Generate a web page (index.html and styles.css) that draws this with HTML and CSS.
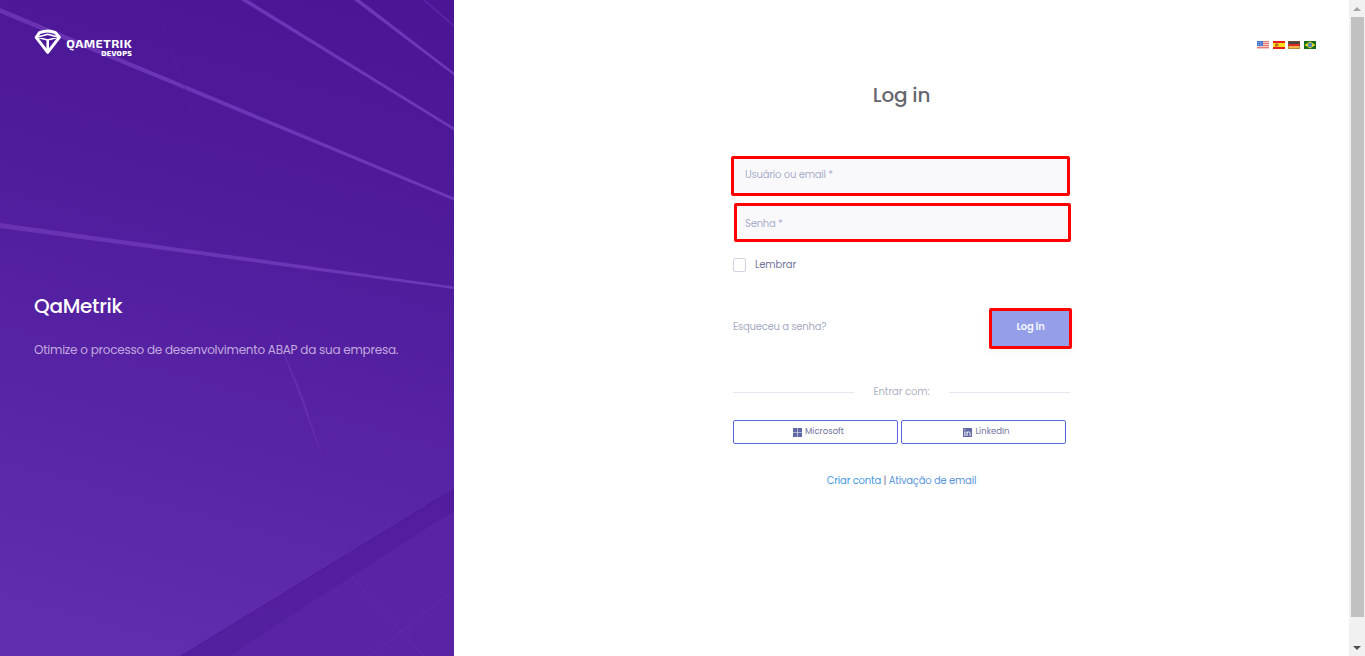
FILE: index.html
```html
<!DOCTYPE html>
<html lang="pt-BR">
<head>
<meta charset="utf-8">
<title>QaMetrik - Log in</title>
<link rel="stylesheet" href="styles.css">
</head>
<body>
<div class="page">
  <aside class="aside">
    <svg class="aside-bg" width="454" height="656" viewBox="0 0 454 656" aria-hidden="true">
      <defs>
        <linearGradient id="sky" x1="330" y1="0" x2="150" y2="656" gradientUnits="userSpaceOnUse">
          <stop offset="0" stop-color="#4a1695"/><stop offset=".35" stop-color="#4f1c9c"/><stop offset="1" stop-color="#612db0"/>
        </linearGradient>
        <linearGradient id="ray" x1="0" x2="454" gradientUnits="userSpaceOnUse" y1="0" y2="0">
          <stop offset="0" stop-color="#6832b2"/><stop offset="1" stop-color="#6c38bb"/>
        </linearGradient>
        <linearGradient id="wall" x1="454" y1="490" x2="230" y2="656" gradientUnits="userSpaceOnUse">
          <stop offset="0" stop-color="#511d9e"/><stop offset="1" stop-color="#5320a0"/>
        </linearGradient>
      </defs>
      <path fill="url(#sky)" d="M0 0h454v656H0z"/>
      <g fill="url(#ray)">
        <path d="M0 8L454 197.500V200.500L0 13z"/>
        <path d="M241 0h7L454 127.500v3z"/>
        <path d="M354 0h6L454 72.500v3z"/>
        <path d="M0 223L454 286.500v2.500L0 228z"/>
      </g>
      <path d="M424 0L454 26" stroke="#5b28a9" stroke-width="1.500"/>
      <path d="M153 0L193 110" stroke="#5520a0" opacity=".7"/>
      <path d="M273 326L303 397L325 465L301 400z" fill="#6632b2" opacity=".7"/>
      <path fill="url(#wall)" d="M454 489V656H181z"/>
      <path fill="#5824a5" d="M454 511V656H230L352 576z"/>
      <path d="M352 577L400 630L424 656M370 656L454 590" fill="none" stroke="#6430ae" stroke-width=".7"/>
      <path d="M454 489L181 656" stroke="#4c1898" stroke-width=".8"/>
    </svg>
    <div class="brand">
      <svg class="gem" width="28" height="27" viewBox="0 0 28 27" fill="none" stroke="#fff" stroke-linejoin="round">
        <path d="M5.500 3.700Q14 .300 21.500 3.700L25.300 8.300L13.700 23.300L2.200 8.300z" stroke-width="3"/>
        <path d="M3 8.200L13.700 5.200L24.500 8.200M3.500 8.200Q9 9.800 13.700 11Q18 9.800 24 8.200" stroke-width="1.600"/>
        <path d="M13.700 10.500V22.500" stroke-width="2.600"/>
      </svg>
      <div class="brand-text"><span class="brand-name">QAMETRIK</span><span class="brand-sub">DEVOPS</span></div>
    </div>
    <div class="intro">
      <h1 class="product">QaMetrik</h1>
      <p class="tagline">Otimize o processo de desenvolvimento ABAP da sua empresa.</p>
    </div>
  </aside>

  <main class="main">
    <nav class="flags">
      <svg width="12" height="8" viewBox="0 0 12 8"><path fill="#f3c9c8" d="M0 0h12v8H0z"/><path d="M0 .500h12M0 2.500h12M0 4.500h12M0 6.500h12" stroke="#e67c76"/><path fill="#4c7bd0" d="M0 0h6v5H0z"/><path d="M1 1.500h4M1 3.500h4" stroke="#b9d0f2" stroke-width=".5" stroke-dasharray="1"/></svg>
      <svg width="12" height="8" viewBox="0 0 12 8"><path fill="#e61d18" d="M0 0h12v8H0z"/><path fill="#ffe01c" d="M0 2h12v4H0z"/><path fill="#c56b24" d="M2 2.500h3.500v3H2z"/></svg>
      <svg width="12" height="8" viewBox="0 0 12 8"><path fill="#4b4440" d="M0 0h12v3H0z"/><path fill="#db2b22" d="M0 3h12v2.500H0z"/><path fill="#f2bd36" d="M0 5.500h12V8H0z"/><path fill="none" stroke="#8a5548" stroke-width=".6" d="M.3.3h11.400v7.400H.3z"/></svg>
      <svg width="12" height="8" viewBox="0 0 12 8"><path fill="#156d19" d="M0 0h12v8H0z"/><path fill="#e5da2d" d="M6 .500L11.500 4L6 7.500L.5 4z"/><circle cx="6" cy="4" r="2.200" fill="#397ab8"/><path d="M4.500 3.500L7.500 4.500" stroke="#a4c6de" stroke-width=".6"/></svg>
    </nav>
    <h2 class="title">Log in</h2>
    <form class="form">
      <input class="field field-user" type="text" placeholder="Usuário ou email *">
      <input class="field field-pass" type="password" placeholder="Senha *">
      <label class="remember"><span class="box"></span><span class="remember-text">Lembrar</span></label>
      <div class="actions">
        <a class="forgot">Esqueceu a senha?</a>
        <button class="login" type="button"><span>Log in</span></button>
      </div>
      <div class="divider"><i></i><span>Entrar com:</span><i></i></div>
      <div class="social">
        <a class="provider"><svg width="9" height="9" viewBox="0 0 9 9" fill="#5f67a4"><path d="M0 0h4.200v4.200H0zM4.700 0H9v4.200H4.700zM0 4.700h4.200V9H0zM4.700 4.700H9V9H4.700z"/></svg><span>Microsoft</span></a>
        <a class="provider"><svg width="9" height="9" viewBox="0 0 9 9"><rect width="9" height="9" rx=".6" fill="#5f67a4"/><path fill="none" stroke="#fff" d="M1.900 3.500V8M1.900 1.300v1M4 8V3.500M4 5Q4.300 3.900 5.700 3.900Q7.100 3.900 7.100 5.400V8"/></svg><span>LinkedIn</span></a>
      </div>
      <p class="links"><a class="create">Criar conta</a><span class="bar">|</span><a class="activate">Ativação de email</a></p>
    </form>
  </main>

  <div class="scrollbar">
    <svg width="16" height="17" viewBox="0 0 16 17"><path fill="#a3a3a3" d="M4 11L8 7l4 4z"/></svg>
    <div class="thumb"></div>
    <svg width="16" height="17" viewBox="0 0 16 17"><path fill="#505050" d="M4 7h8l-4 4z"/></svg>
  </div>
</div>
</body>
</html>
```

FILE: styles.css
```css
* { box-sizing: border-box; }
body { margin: 0; overflow: hidden; font-family: Poppins, Inter, "Open Sans", sans-serif; font-size: 10px; letter-spacing: -.2px; background: #fff; }
h1, h2, p { margin: 0; font-weight: 500; }
span, a, h1, h2, p { white-space: nowrap; }

.page { display: grid; grid-template-columns: 454px 1fr 16px; width: 1365px; height: 656px; }

.aside { position: relative; padding: 29px 34px; color: #fff; }
.aside-bg { position: absolute; inset: 0; }
.brand { position: relative; display: flex; height: 29px; }
.brand-text { display: flex; flex-direction: column; align-items: flex-end; width: 66px; margin-left: 4px; padding-top: 8px; font-family: "Exo 2", Roboto, sans-serif; }
.brand-name { font-size: 12.500px; line-height: 13px; font-weight: 700; letter-spacing: .4px; }
.brand-sub { font-size: 7.500px; line-height: 7px; font-weight: 800; letter-spacing: .3px; }
.intro { position: relative; margin-top: 233px; }
.product { font-size: 20px; line-height: 30px; letter-spacing: -.3px; }
.tagline { margin-top: 19px; font-size: 12px; line-height: 20px; font-weight: 400; letter-spacing: -.24px; color: #c2a8df; }

.main { display: flex; flex-direction: column; align-items: center; }
.flags { display: flex; gap: 3.700px; align-self: flex-end; margin: 41px 33px 0 0; height: 8px; }
.title { margin-top: 31px; font-size: 20px; line-height: 30px; color: #67666e; }

.form { display: flex; flex-direction: column; width: 337px; margin-top: 46px; }
.field { display: block; border: 3px solid #f00; border-radius: 2px; background: #f9f9fc; outline: 0; font: 400 10px/14px Poppins, Inter, sans-serif; letter-spacing: -.2px; }
.field::placeholder { color: #a9afca; opacity: 1; }
.field-user { width: 339px; height: 40px; margin-left: -2px; padding: 0 11px 3px; }
.field-pass { width: 337px; height: 39px; margin: 7px 0 0 1px; padding: 2px 8px 0; }
.remember { display: flex; align-items: center; gap: 9px; height: 14px; margin-top: 16px; letter-spacing: -.1px; color: #74749a; }
.box { width: 13px; height: 14px; border: 1px solid #d1d4e3; border-radius: 2px; }
.actions { display: flex; justify-content: space-between; height: 41px; margin: 36px -2px 0 0; }
.forgot { line-height: 38px; color: #a7abc5; }
.login { width: 83px; height: 41px; padding: 0 0 4px; border: 3px solid #f00; border-radius: 2px; background: #959ee9; box-shadow: 0 3px 10px rgba(80,80,160,.06); color: #f4f4fd; font: 600 10px/14px Poppins, Inter, sans-serif; letter-spacing: -.25px; }
.divider { display: flex; align-items: center; justify-content: space-between; height: 16px; margin-top: 35px; letter-spacing: -.08px; color: #afb0c4; }
.divider i { width: 121px; height: 1px; margin-top: 1px; background: #e6e7f0; }
.social { display: flex; gap: 3px; margin-top: 20px; }
.provider { display: flex; align-items: center; justify-content: center; gap: 3px; width: 165px; height: 24px; padding-left: 6px; border: 1px solid #5867dd; border-radius: 2px; color: #73749d; font-size: 8.500px; letter-spacing: 0; }
.provider span { margin-top: -2px; }
.links { display: flex; justify-content: center; gap: 2.500px; margin-top: 29px; line-height: 16px; color: #7c6f98; font-weight: 400; }
.create { color: #4597df; }
.activate { color: #5a95db; }

.scrollbar { display: flex; flex-direction: column; background: #f1f1f1; }
.thumb { width: 13px; height: 600px; margin-left: 2px; background: #c1c1c1; }
.scrollbar svg:last-child { margin-top: 22px; }
```
